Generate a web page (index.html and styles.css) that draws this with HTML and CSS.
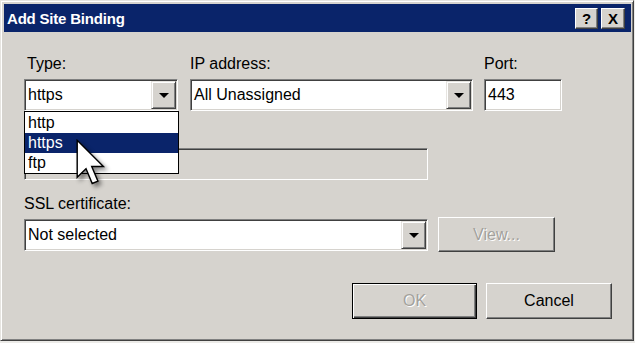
FILE: index.html
```html
<!DOCTYPE html>
<html lang="en">
<head>
    <meta charset="UTF-8">
    <title>Add Site Binding</title>
    <link rel="stylesheet" href="styles.css">
</head>
<body>
    <div class="window">
        <div class="titlebar">
            <span class="title">Add Site Binding</span>
            <div class="title-buttons">
                <span class="tb-btn">?</span>
                <span class="tb-btn tb-close">X</span>
            </div>
        </div>

        <div class="content">
            <div class="row-top">
                <div class="field field-type">
                    <label class="label label-type">Type:</label>
                    <div class="combo-wrap">
                        <div class="combo">
                            <span class="combo-text">https</span>
                            <span class="combo-btn"><span class="arrow"></span></span>
                        </div>
                        <ul class="droplist">
                            <li>http</li>
                            <li class="selected">https</li>
                            <li>ftp</li>
                        </ul>
                    </div>
                </div>
                <div class="field field-ip">
                    <label class="label">IP address:</label>
                    <div class="combo">
                        <span class="combo-text">All Unassigned</span>
                        <span class="combo-btn"><span class="arrow"></span></span>
                    </div>
                </div>
                <div class="field field-port">
                    <label class="label">Port:</label>
                    <div class="textbox">443</div>
                </div>
            </div>

            <!-- host name label sits under the open list -->
            <div class="label-spacer"></div>
            <div class="textbox textbox-disabled host-field"></div>

            <label class="label label-ssl">SSL certificate:</label>
            <div class="row-ssl">
                <div class="combo combo-ssl">
                    <span class="combo-text">Not selected</span>
                    <span class="combo-btn"><span class="arrow"></span></span>
                </div>
                <span class="button button-view disabled">View...</span>
            </div>

            <div class="row-actions">
                <span class="button button-default disabled">OK</span>
                <span class="button button-cancel">Cancel</span>
            </div>
        </div>

        <svg class="cursor" width="31" height="48" viewBox="0 0 13 20">
            <path d="M0.5 0.5 L0.5 16 L4.2 12.4 L6.8 18.6 L9.2 17.6 L6.6 11.5 L11.5 11.5 Z" fill="#fff" stroke="#000" stroke-width="0.6" stroke-linejoin="miter"/>
        </svg>
    </div>
</body>
</html>
```

FILE: styles.css
```css
* {
    box-sizing: border-box;
}

body {
    margin: 0;
    background-color: #ecebe8;
    font-family: "Liberation Sans", Arial, sans-serif;
    font-size: 16px;
    color: #000;
}

.window {
    position: relative;
    display: flex;
    flex-direction: column;
    width: 634px;
    height: 341px;
    padding: 3px 2px 2px 3px;
    background-color: #d6d3ce;
    border: 1px solid;
    border-color: #e6e4e0 #404040 #404040 #e6e4e0;
    box-shadow: inset 1px 1px #fff, inset -1px -1px #808080;
}

.titlebar {
    display: flex;
    align-items: center;
    justify-content: space-between;
    height: 28px;
    padding: 0 6px 0 3px;
    background-color: #0a246a;
    color: #fff;
}

.title {
    font-weight: bold;
    font-size: 15px;
    letter-spacing: -0.2px;
}

.title-buttons {
    display: flex;
    gap: 3px;
}

.tb-btn {
    display: flex;
    align-items: center;
    justify-content: center;
    width: 23px;
    height: 21px;
    background-color: #d6d3ce;
    color: #000;
    font-weight: bold;
    font-size: 15px;
    border: 1px solid;
    border-color: #fff #404040 #404040 #fff;
    box-shadow: inset -1px -1px #808080;
}

.tb-close {
    width: 24px;
}

.content {
    flex: 1;
    padding: 23px 19px 0 20px;
}

.label {
    display: block;
    line-height: 18px;
    margin-bottom: 6px;
}

.label-type {
    padding-left: 3px;
}

.row-top {
    display: flex;
}

.field-type {
    width: 154px;
    margin-right: 12px;
}

.field-ip {
    width: 283px;
    margin-right: 11px;
}

.field-port {
    width: 78px;
}

.combo-wrap {
    position: relative;
}

.combo,
.textbox {
    display: flex;
    align-items: center;
    height: 32px;
    background-color: #fff;
    border: 1px solid;
    border-color: #808080 #fff #fff #808080;
    box-shadow: inset 1px 1px #404040, inset -1px -1px #d6d3ce;
}

.textbox {
    padding-left: 3px;
}

.combo-text {
    flex: 1;
    padding-left: 3px;
}

.combo-btn {
    display: flex;
    align-items: center;
    justify-content: center;
    width: 25px;
    height: 28px;
    margin-right: 1px;
    background-color: #d6d3ce;
    border: 1px solid;
    border-color: #e6e4e0 #404040 #404040 #e6e4e0;
    box-shadow: inset 1px 1px #fff, inset -1px -1px #808080;
}

.arrow {
    width: 0;
    height: 0;
    border-left: 5px solid transparent;
    border-right: 5px solid transparent;
    border-top: 5px solid #000;
    margin-top: 1px;
}

.droplist {
    position: absolute;
    top: 32px;
    left: 0;
    width: 155px;
    margin: 0;
    padding: 1px 0 0;
    list-style: none;
    background-color: #fff;
    border: 1px solid #000;
    z-index: 10;
}

.droplist li {
    height: 20px;
    line-height: 20px;
    padding-left: 3px;
}

.droplist li.selected {
    background-color: #0a246a;
    color: #fff;
}

.label-spacer {
    height: 37px;
}

.host-field {
    width: 404px;
}

.textbox-disabled {
    background-color: #d6d3ce;
}

.label-ssl {
    margin-top: 15px;
    margin-bottom: 4px;
}

.row-ssl {
    display: flex;
    align-items: center;
    gap: 10px;
}

.combo-ssl {
    width: 404px;
}

.button {
    display: flex;
    align-items: center;
    justify-content: center;
    height: 36px;
    background-color: #d6d3ce;
    border: 1px solid;
    border-color: #fff #404040 #404040 #fff;
    box-shadow: inset -1px -1px #808080;
}

.button.disabled {
    color: #a3a19c;
    text-shadow: 1px 1px #fff;
}

.button-view {
    width: 117px;
    height: 35px;
}

.row-actions {
    display: flex;
    justify-content: flex-end;
    gap: 9px;
    margin-top: 31px;
}

.button-default {
    width: 125px;
    border-color: #000;
    box-shadow: inset 1px 1px #fff, inset -1px -1px #404040, inset -2px -2px #808080;
}

.button-cancel {
    width: 126px;
}

.cursor {
    position: absolute;
    left: 75px;
    top: 138px;
    z-index: 20;
    filter: drop-shadow(3px 3px 2px rgba(0, 0, 0, 0.45));
}
```
